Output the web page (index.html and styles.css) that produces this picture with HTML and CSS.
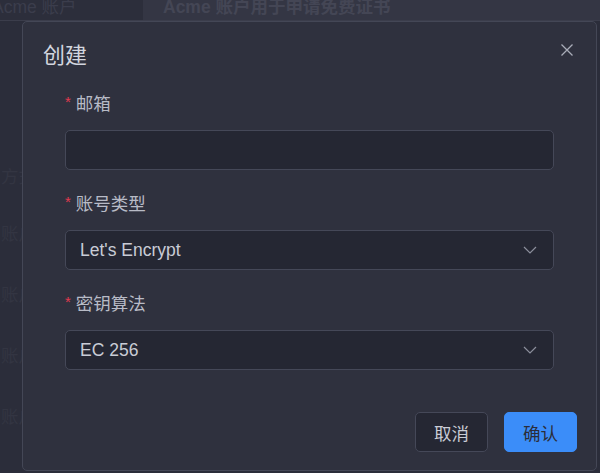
FILE: index.html
```html
<html>
<head>
  <title>Acme 账户</title>
  <link rel="stylesheet" href="styles.css">
</head>
<body>
  <!-- Page behind the dialog -->
  <div class="table">
    <div class="thead">
      <div class="col-name">Acme 账户</div>
      <div class="col-desc">Acme 账户用于申请免费证书</div>
    </div>
    <div class="row row-first"><div class="col-name">方式</div></div>
    <div class="row"><div class="col-name">账户</div></div>
    <div class="row"><div class="col-name">账户</div></div>
    <div class="row"><div class="col-name">账户</div></div>
    <div class="row"><div class="col-name">账户</div></div>
  </div>

  <!-- Create dialog -->
  <div class="dialog">
    <div class="dialog-header">
      <span class="dialog-title">创建</span>
      <button class="dialog-close" type="button">
        <svg width="12" height="12" viewBox="0 0 12 12">
          <path d="M0.5 0.5 L11.5 11.5 M11.5 0.5 L0.5 11.5" stroke="#a9acb8" stroke-width="1.3" fill="none"/>
        </svg>
      </button>
    </div>

    <form class="dialog-body">
      <div class="form-item">
        <label class="form-label"><span class="required">*</span>邮箱</label>
        <input class="form-input" type="text">
      </div>
      <div class="form-item">
        <label class="form-label"><span class="required">*</span>账号类型</label>
        <div class="form-select">
          <span>Let's Encrypt</span>
          <svg width="14" height="8" viewBox="0 0 14 8">
            <polyline points="1,1 7,7 13,1" stroke="#8c8f9c" stroke-width="1.2" fill="none"/>
          </svg>
        </div>
      </div>
      <div class="form-item">
        <label class="form-label"><span class="required">*</span>密钥算法</label>
        <div class="form-select">
          <span>EC 256</span>
          <svg width="14" height="8" viewBox="0 0 14 8">
            <polyline points="1,1 7,7 13,1" stroke="#8c8f9c" stroke-width="1.2" fill="none"/>
          </svg>
        </div>
      </div>
    </form>

    <div class="dialog-footer">
      <button class="btn" type="button">取消</button>
      <button class="btn btn-primary" type="button">确认</button>
    </div>
  </div>
</body>
</html>
```

FILE: styles.css
```css
/* Page behind the dialog, already dimmed by the mask */
body {
  margin: 0;
  background-color: #2b2d3a;
  font-family: "Liberation Sans", "Noto Sans CJK SC", sans-serif;
  font-size: 17.5px;
  overflow: hidden;
}
.table {
  margin-top: -10px;
}
.thead {
  display: flex;
  height: 31px;
  align-items: center;
  border-bottom: 1px solid #3b3d4b;
  box-sizing: border-box;
  background-color: #343644;
}
.thead .col-name {
  width: 151px;
  margin-left: -8px;
  height: 100%;
  display: flex;
  align-items: center;
  background-color: #2c2e3b;
  color: #3b3d4c;
}
.thead .col-desc {
  padding-left: 20px;
  color: #444655;
  font-weight: bold;
}
.row {
  display: flex;
  align-items: center;
  height: 61px;
  color: #333542;
}
.row .col-name {
  padding-left: 1px;
  line-height: 24px;
}
.row-first {
  height: 182px;
  align-items: flex-end;
  padding-bottom: 14px;
  box-sizing: border-box;
}

/* Dialog */
.dialog {
  position: absolute;
  left: 22px;
  top: 21px;
  width: 575px;
  height: 450px;
  box-sizing: border-box;
  border: 1px solid #444756;
  border-radius: 5px;
  background-color: #2f313e;
  display: flex;
  flex-direction: column;
}
.dialog-header {
  position: relative;
  padding: 19px 20px 0 20px;
}
.dialog-title {
  display: block;
  font-size: 22px;
  line-height: 30px;
  color: #d2d5de;
}
.dialog-close {
  position: absolute;
  top: 22px;
  right: 23px;
  width: 12px;
  height: 12px;
  padding: 0;
  border: none;
  background: none;
  display: flex;
  cursor: pointer;
}
.dialog-body {
  margin: 0;
  padding: 21px 42px 0 42px;
}
.form-item {
  margin-bottom: 22px;
}
.form-label {
  display: flex;
  align-items: center;
  line-height: 24px;
  margin-bottom: 14px;
  color: #b8bbc6;
}
.required {
  color: #e3394f;
  font-size: 15px;
  margin-right: 5px;
  margin-top: -4px;
}
.form-input,
.form-select {
  display: flex;
  align-items: center;
  justify-content: space-between;
  width: 100%;
  height: 40px;
  box-sizing: border-box;
  padding: 0 16px 0 14px;
  border: 1px solid #454858;
  border-radius: 5px;
  background-color: #252733;
  color: #c9ccd6;
  font-family: inherit;
  font-size: 17.5px;
  outline: none;
}
.dialog-footer {
  display: flex;
  justify-content: flex-end;
  gap: 16px;
  padding: 20px 19px 0 0;
}
.btn {
  height: 40px;
  padding: 0 18px;
  border: 1px solid #454858;
  border-radius: 5px;
  background-color: #252733;
  color: #c9ccd6;
  font-family: inherit;
  font-size: 17.5px;
  cursor: pointer;
}
.btn-primary {
  background-color: #3b8df9;
  border-color: #3b8df9;
  color: #2b2d3a;
}
```
